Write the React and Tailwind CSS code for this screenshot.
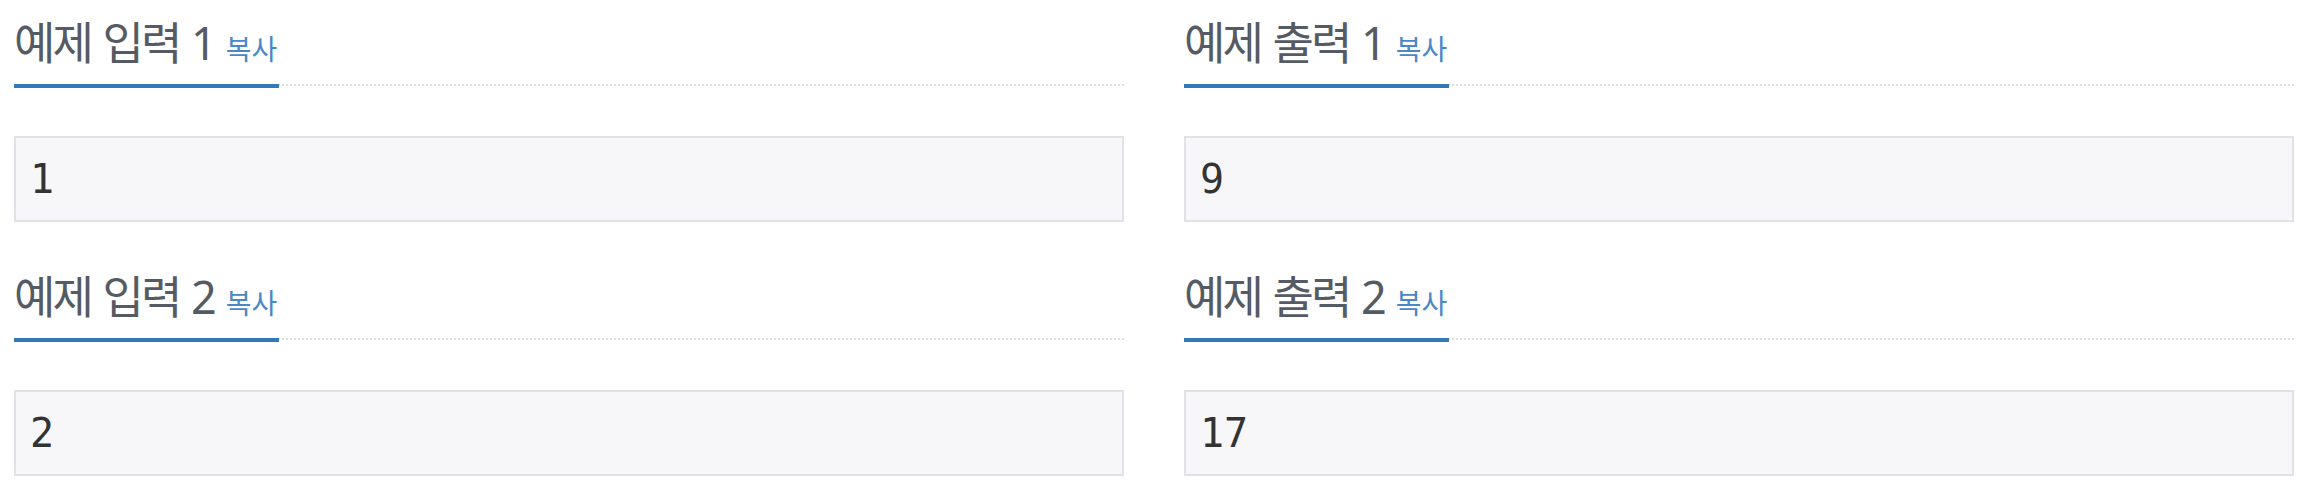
import React from 'react';

const samples = [
  { kind: '입력', no: '1', data: '1' },
  { kind: '출력', no: '1', data: '9' },
  { kind: '입력', no: '2', data: '2' },
  { kind: '출력', no: '2', data: '17' },
];

const Sample = ({ kind, no, data }) => (
  <section className="pb-[32px]">
    <div className="flex border-b-2 border-dotted border-[#dddddd]">
      <h2 className="-mb-[4px] h-[88px] border-b-4 border-[#337ab7] pt-[21px] pr-[2px] text-[45px] leading-[44px] font-normal text-[#555b64] whitespace-nowrap">
        <span className="tracking-[-3px]">예제</span> <span className="tracking-[-3px]">{kind}</span> {no}
        <a href="#" className="ml-[9px] text-[28px] text-[#4a87c6]">복사</a>
      </h2>
    </div>
    <pre className="mt-[50px] h-[86px] border-2 border-[#e1e1e8] bg-[#f7f7f9] px-[14px] py-[18px] text-[40px] leading-[46px] text-[#333333] font-['DejaVu_Sans_Mono',monospace]">
      {data}
    </pre>
  </section>
);

const App = () => {
  return (
    <div className="min-h-screen bg-white pl-[14px] pr-[22px] font-['Noto_Sans','Noto_Sans_CJK_KR',sans-serif]">
      <div className="grid grid-cols-2 gap-x-[60px]">
        {samples.map((s) => (
          <Sample key={s.kind + s.no} kind={s.kind} no={s.no} data={s.data} />
        ))}
      </div>
    </div>
  );
};

export default App;
